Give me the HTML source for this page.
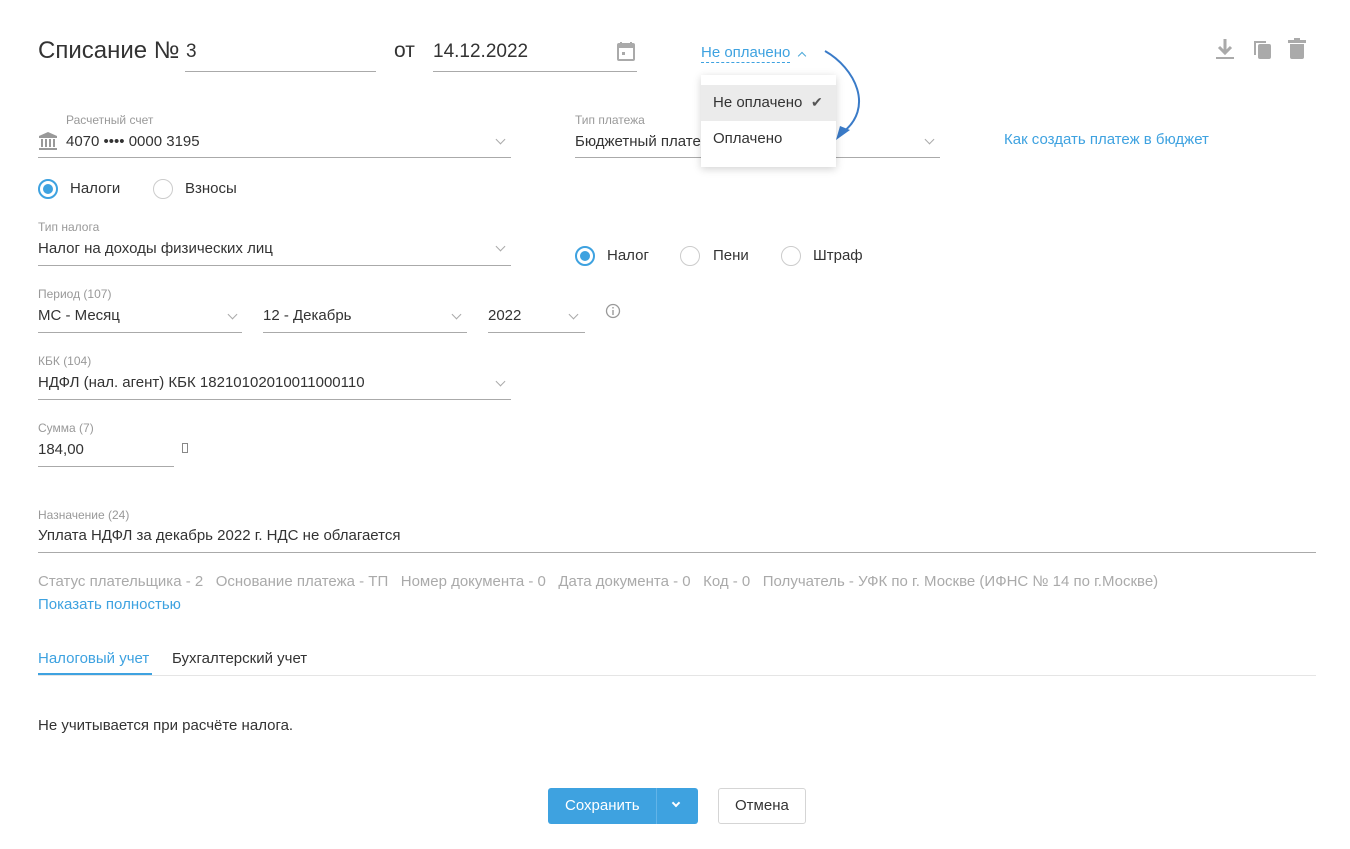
<!DOCTYPE html>
<html><head><meta charset="utf-8"><style>
*{box-sizing:border-box;margin:0;padding:0}
body{width:1350px;height:849px;background:#fff;font-family:"Liberation Sans",sans-serif;color:#333;position:relative;overflow:hidden;font-size:15px}
.a{position:absolute;white-space:nowrap}
.lbl{font-size:12px;color:#999}
.line{position:absolute;height:1px;background:#aaa}
.chev{position:absolute;width:7px;height:7px;border-right:1.5px solid #aaa;border-bottom:1.5px solid #aaa;transform:rotate(45deg)}
.radio{position:absolute;width:20px;height:20px;border-radius:50%;border:1px solid #ccc;background:#fff}
.radio.on{border:2px solid #3ea2e0}
.radio.on::after{content:"";position:absolute;left:3px;top:3px;width:10px;height:10px;border-radius:50%;background:#3ea2e0}
.blue{color:#3ea2e0}
.g{color:#aaa}
</style></head><body>

<div class="a" style="left:38px;top:37px;font-size:24px;color:#333">Списание №</div>
<div class="a" style="left:186px;top:41px;font-size:19px">3</div>
<div class="line" style="left:185px;top:71px;width:191px"></div>
<div class="a" style="left:394px;top:39px;font-size:21px">от</div>
<div class="a" style="left:433px;top:41px;font-size:19px">14.12.2022</div>
<div class="line" style="left:433px;top:71px;width:204px"></div>
<svg class="a" style="left:617px;top:41px" width="18" height="20" viewBox="0 0 18 20"><rect x="3" y="1" width="2" height="4" fill="#aaa"/><rect x="13" y="1" width="2" height="4" fill="#aaa"/><rect x="1" y="3" width="16" height="16" rx="1" fill="none" stroke="#aaa" stroke-width="2"/><rect x="1" y="3" width="16" height="4" fill="#aaa"/><rect x="5" y="11" width="3" height="3" fill="#aaa"/></svg>

<div class="a blue" style="left:701px;top:44px;font-size:15px;border-bottom:1px dashed #3ea2e0;padding-bottom:1px">Не оплачено</div>
<div class="chev" style="left:799px;top:53px;transform:rotate(225deg);border-color:#4aa8d8;width:6px;height:6px"></div>

<svg class="a" style="left:820px;top:48px" width="50" height="95" viewBox="0 0 50 95"><path d="M5 3 C35 20 55 60 22 85" fill="none" stroke="#3a7bc8" stroke-width="2"/><path d="M16 92 L30 82 L20 78 Z" fill="#3a7bc8"/></svg>

<svg class="a" style="left:1215px;top:38px" width="20" height="22" viewBox="0 0 20 22"><path d="M10 1 V14 M4 9 L10 15 L16 9" fill="none" stroke="#aaa" stroke-width="3"/><rect x="1" y="19" width="18" height="2" fill="#aaa"/></svg>
<svg class="a" style="left:1252px;top:38px" width="20" height="22" viewBox="0 0 20 22"><path d="M2 3 V17 H4 V5 H14 V3 Z" fill="#aaa"/><rect x="6" y="6" width="13" height="15" rx="2" fill="#aaa"/></svg>
<svg class="a" style="left:1288px;top:38px" width="18" height="22" viewBox="0 0 18 22"><rect x="0" y="2" width="18" height="3" fill="#aaa"/><rect x="6" y="0" width="6" height="3" fill="#aaa"/><path d="M2 6 H16 V19 Q16 21 14 21 H4 Q2 21 2 19 Z" fill="#aaa"/></svg>

<div class="a lbl" style="left:66px;top:113px">Расчетный счет</div>
<svg class="a" style="left:38px;top:131px" width="20" height="20" viewBox="0 0 20 20"><path d="M10 1 L19 5 V7 H1 V5 Z" fill="#999"/><rect x="3" y="8" width="2" height="8" fill="#999"/><rect x="7" y="8" width="2" height="8" fill="#999"/><rect x="11" y="8" width="2" height="8" fill="#999"/><rect x="15" y="8" width="2" height="8" fill="#999"/><rect x="1" y="17" width="18" height="2" fill="#999"/></svg>
<div class="a" style="left:66px;top:133px">4070 •••• 0000 3195</div>
<div class="chev" style="left:497px;top:136px"></div>
<div class="line" style="left:38px;top:157px;width:473px"></div>

<div class="a lbl" style="left:575px;top:113px">Тип платежа</div>
<div class="a" style="left:575px;top:133px">Бюджетный плате</div>
<div class="chev" style="left:926px;top:136px"></div>
<div class="line" style="left:575px;top:157px;width:365px"></div>
<div class="a blue" style="left:1004px;top:131px">Как создать платеж в бюджет</div>

<div class="a" style="left:701px;top:75px;width:135px;height:92px;background:#fff;box-shadow:0 2px 8px rgba(0,0,0,.18)">
  <div style="position:absolute;left:0;top:10px;width:135px;height:36px;background:#ebebeb"></div>
  <div class="a" style="left:12px;top:19px;color:#333">Не оплачено</div>
  <div class="a" style="left:110px;top:19px;color:#555;font-size:14px">✔</div>
  <div class="a" style="left:12px;top:55px;color:#333">Оплачено</div>
</div>

<div class="radio on" style="left:38px;top:179px"></div>
<div class="a" style="left:70px;top:180px">Налоги</div>
<div class="radio" style="left:153px;top:179px"></div>
<div class="a" style="left:185px;top:180px">Взносы</div>

<div class="a lbl" style="left:38px;top:220px">Тип налога</div>
<div class="a" style="left:38px;top:240px">Налог на доходы физических лиц</div>
<div class="chev" style="left:497px;top:243px"></div>
<div class="line" style="left:38px;top:265px;width:473px"></div>

<div class="radio on" style="left:575px;top:246px"></div>
<div class="a" style="left:607px;top:247px">Налог</div>
<div class="radio" style="left:680px;top:246px"></div>
<div class="a" style="left:713px;top:247px">Пени</div>
<div class="radio" style="left:781px;top:246px"></div>
<div class="a" style="left:813px;top:247px">Штраф</div>

<div class="a lbl" style="left:38px;top:287px">Период (107)</div>
<div class="a" style="left:38px;top:307px">МС - Месяц</div>
<div class="chev" style="left:229px;top:311px"></div>
<div class="line" style="left:38px;top:332px;width:204px"></div>
<div class="a" style="left:263px;top:307px">12 - Декабрь</div>
<div class="chev" style="left:453px;top:311px"></div>
<div class="line" style="left:263px;top:332px;width:204px"></div>
<div class="a" style="left:488px;top:307px">2022</div>
<div class="chev" style="left:570px;top:311px"></div>
<div class="line" style="left:488px;top:332px;width:97px"></div>
<svg class="a" style="left:605px;top:303px" width="16" height="16" viewBox="0 0 16 16"><circle cx="8" cy="8" r="6.5" fill="none" stroke="#999" stroke-width="1.3"/><rect x="7.3" y="7" width="1.4" height="5" fill="#999"/><rect x="7.3" y="4" width="1.4" height="1.5" fill="#999"/></svg>

<div class="a lbl" style="left:38px;top:354px">КБК (104)</div>
<div class="a" style="left:38px;top:374px">НДФЛ (нал. агент) КБК 18210102010011000110</div>
<div class="chev" style="left:497px;top:378px"></div>
<div class="line" style="left:38px;top:399px;width:473px"></div>

<div class="a lbl" style="left:38px;top:421px">Сумма (7)</div>
<div class="a" style="left:38px;top:441px">184,00</div>
<div class="line" style="left:38px;top:466px;width:136px"></div>
<div class="a" style="left:182px;top:443px;width:6px;height:10px;border:1px solid #888"></div>

<div class="a lbl" style="left:38px;top:508px">Назначение (24)</div>
<div class="a" style="left:38px;top:527px">Уплата НДФЛ за декабрь 2022 г. НДС не облагается</div>
<div class="line" style="left:38px;top:552px;width:1278px"></div>

<div class="a g" style="left:38px;top:573px">Статус плательщика - 2 &nbsp;&nbsp;Основание платежа - ТП &nbsp;&nbsp;Номер документа - 0 &nbsp;&nbsp;Дата документа - 0 &nbsp;&nbsp;Код - 0 &nbsp;&nbsp;Получатель - УФК по г. Москве (ИФНС № 14 по г.Москве)</div>
<div class="a blue" style="left:38px;top:596px">Показать полностью</div>

<div class="a blue" style="left:38px;top:650px">Налоговый учет</div>
<div class="a" style="left:172px;top:650px">Бухгалтерский учет</div>
<div class="a" style="left:38px;top:675px;width:1278px;height:1px;background:#e5e5e5"></div>
<div class="a" style="left:38px;top:673px;width:114px;height:2px;background:#3ea2e0"></div>

<div class="a" style="left:38px;top:717px">Не учитывается при расчёте налога.</div>

<div class="a" style="left:548px;top:788px;width:150px;height:36px;background:#3ea2e0;border-radius:3px"></div>
<div class="a" style="left:656px;top:788px;width:1px;height:36px;background:#62b4e8"></div>
<div class="a" style="left:565px;top:797px;color:#fff;font-size:15px">Сохранить</div>
<div class="chev" style="left:673px;top:800px;border-color:#fff;border-width:2px;width:6px;height:6px"></div>
<div class="a" style="left:718px;top:788px;width:88px;height:36px;border:1px solid #d5d5d5;border-radius:3px"></div>
<div class="a" style="left:735px;top:797px">Отмена</div>
</body></html>
